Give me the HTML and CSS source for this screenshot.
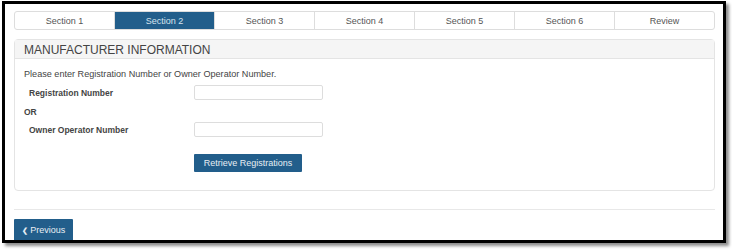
FILE: index.html
```html
<!DOCTYPE html>
<html>
<head>
<meta charset="utf-8">
<link rel="stylesheet" href="styles.css">
</head>
<body>
<div class="frame">
  <div class="tabs">
    <div class="tab">Section 1</div>
    <div class="tab active">Section 2</div>
    <div class="tab">Section 3</div>
    <div class="tab">Section 4</div>
    <div class="tab">Section 5</div>
    <div class="tab">Section 6</div>
    <div class="tab">Review</div>
  </div>
  <div class="panel">
    <div class="panel-heading">MANUFACTURER INFORMATION</div>
    <div class="panel-body">
      <p class="intro">Please enter Registration Number or Owner Operator Number.</p>
      <div class="row row-reg">
        <label class="label">Registration Number</label>
        <input class="input" type="text">
      </div>
      <div class="or">OR</div>
      <div class="row row-owner">
        <label class="label">Owner Operator Number</label>
        <input class="input" type="text">
      </div>
      <div class="actions">
        <button class="btn retrieve">Retrieve Registrations</button>
      </div>
    </div>
  </div>
  <div class="footer">
    <button class="btn prev"><span class="chev">&#10094;</span> Previous</button>
  </div>
</div>
</body>
</html>
```
FILE: styles.css
```css
* { box-sizing: border-box; }
html, body { margin: 0; padding: 0; background: #fff; }
body {
  font-family: "Liberation Sans", Arial, sans-serif;
  color: #333;
  overflow: hidden;
  height: 251px;
}
.frame {
  margin: 1px 0 0 2px;
  width: 724px;
  height: 242px;
  border: 3px solid #000;
  box-shadow: 3px 3px 3px rgba(0,0,0,0.45);
  padding: 7px 8px 0 9px;
  overflow: hidden;
}
.tabs {
  display: flex;
  height: 19px;
  border: 1px solid #ddd;
  border-radius: 3px;
}
.tab {
  flex: 1;
  display: flex;
  align-items: center;
  justify-content: center;
  font-size: 9px;
  color: #555;
  border-left: 1px solid #ddd;
}
.tab:first-child { border-left: none; }
.tab.active {
  background: #225e8b;
  color: #d8e4ee;
}
.panel {
  margin-top: 9px;
  border: 1px solid #e4e4e4;
  border-radius: 4px;
  height: 152px;
}
.panel-heading {
  height: 19px;
  background: #f5f5f5;
  border-bottom: 1px solid #e4e4e4;
  font-size: 12px;
  color: #444;
  padding: 3px 0 0 9px;
  line-height: 14px;
}
.panel-body {
  padding: 10px 0 0 9px;
}
.intro {
  margin: 0;
  font-size: 9.1px;
  line-height: 10px;
  color: #444;
}
.row {
  display: flex;
  align-items: center;
  height: 15px;
}
.row-reg { margin-top: 6px; }
.row-owner { margin-top: 5px; }
.label {
  width: 170px;
  padding-left: 5px;
  font-weight: bold;
  font-size: 8.5px;
  color: #444;
}
.input {
  width: 129px;
  height: 15px;
  border: 1px solid #ddd;
  border-radius: 2px;
  padding: 0;
  margin: 0;
}
.or {
  font-weight: bold;
  font-size: 8.5px;
  color: #444;
  height: 10px;
  line-height: 10px;
  margin-top: 7px;
}
.actions {
  padding-left: 170px;
  margin-top: 17px;
  display: flex;
}
.btn {
  background: #225e8b;
  color: #e8eef4;
  border: none;
  border-radius: 1px;
  font-family: "Liberation Sans", Arial, sans-serif;
  font-size: 9px;
  height: 18px;
  padding: 0 9px;
  margin: 0;
}
.retrieve { width: 108px; padding: 0; }
.footer {
  margin-top: 18px;
  border-top: 1px solid #e8e8e8;
  padding-top: 9px;
}
.prev {
  height: 22px;
  width: 59px;
  padding: 0;
}
.chev {
  font-size: 7px;
  font-weight: bold;
}
```
